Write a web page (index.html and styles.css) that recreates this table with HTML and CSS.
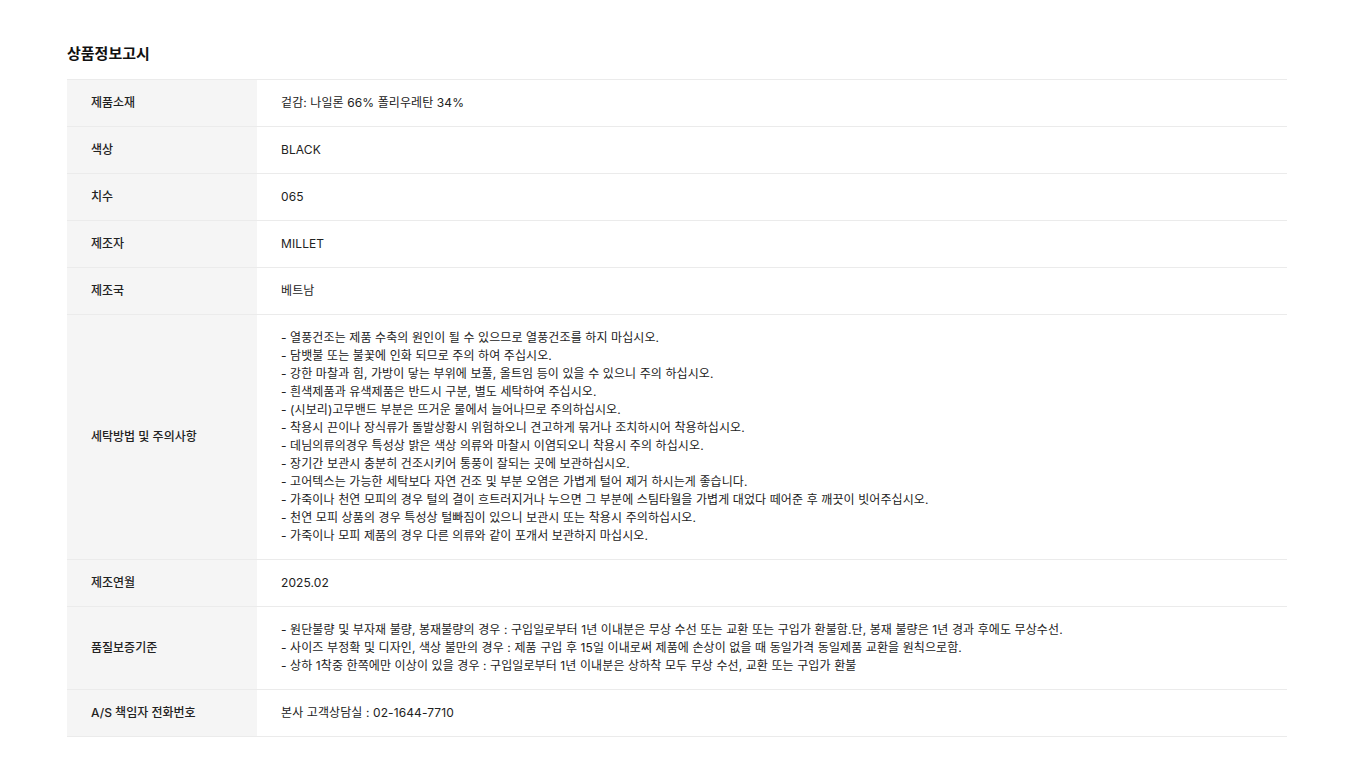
FILE: index.html
```html
<!DOCTYPE html>
<html lang="ko">
<head>
    <meta charset="UTF-8" />
    <meta name="viewport" content="width=device-width, initial-scale=1.0" />
    <title>상품정보고시</title>
    <link rel="stylesheet" href="styles.css">
</head>
<body>
    <div class="container">
        <h2 class="title">상품정보고시</h2>
        <table class="info">
            <tr>
                <th>제품소재</th>
                <td>겉감: 나일론 66% 폴리우레탄 34%</td>
            </tr>
            <tr>
                <th>색상</th>
                <td>BLACK</td>
            </tr>
            <tr>
                <th>치수</th>
                <td>065</td>
            </tr>
            <tr>
                <th>제조자</th>
                <td>MILLET</td>
            </tr>
            <tr>
                <th>제조국</th>
                <td>베트남</td>
            </tr>
            <tr>
                <th>세탁방법 및 주의사항</th>
                <td>- 열풍건조는 제품 수축의 원인이 될 수 있으므로 열풍건조를 하지 마십시오.<br>
- 담뱃불 또는 불꽃에 인화 되므로 주의 하여 주십시오.<br>
- 강한 마찰과 힘, 가방이 닿는 부위에 보풀, 올트임 등이 있을 수 있으니 주의 하십시오.<br>
- 흰색제품과 유색제품은 반드시 구분, 별도 세탁하여 주십시오.<br>
- (시보리)고무밴드 부분은 뜨거운 물에서 늘어나므로 주의하십시오.<br>
- 착용시 끈이나 장식류가 돌발상황시 위험하오니 견고하게 묶거나 조치하시어 착용하십시오.<br>
- 데님의류의경우 특성상 밝은 색상 의류와 마찰시 이염되오니 착용시 주의 하십시오.<br>
- 장기간 보관시 충분히 건조시키어 통풍이 잘되는 곳에 보관하십시오.<br>
- 고어텍스는 가능한 세탁보다 자연 건조 및 부분 오염은 가볍게 털어 제거 하시는게 좋습니다.<br>
- 가죽이나 천연 모피의 경우 털의 결이 흐트러지거나 누으면 그 부분에 스팀타월을 가볍게 대었다 떼어준 후 깨끗이 빗어주십시오.<br>
- 천연 모피 상품의 경우 특성상 털빠짐이 있으니 보관시 또는 착용시 주의하십시오.<br>
- 가죽이나 모피 제품의 경우 다른 의류와 같이 포개서 보관하지 마십시오.</td>
            </tr>
            <tr>
                <th>제조연월</th>
                <td>2025.02</td>
            </tr>
            <tr>
                <th>품질보증기준</th>
                <td>- 원단불량 및 부자재 불량, 봉재불량의 경우 : 구입일로부터 1년 이내분은 무상 수선 또는 교환 또는 구입가 환불함.단, 봉재 불량은 1년 경과 후에도 무상수선.<br>
- 사이즈 부정확 및 디자인, 색상 불만의 경우 : 제품 구입 후 15일 이내로써 제품에 손상이 없을 때 동일가격 동일제품 교환을 원칙으로함.<br>
- 상하 1착중 한쪽에만 이상이 있을 경우 : 구입일로부터 1년 이내분은 상하착 모두 무상 수선, 교환 또는 구입가 환불</td>
            </tr>
            <tr>
                <th>A/S 책임자 전화번호</th>
                <td>본사 고객상담실 : 02-1644-7710</td>
            </tr>
        </table>
    </div>
</body>
</html>
```

FILE: styles.css
```css
body,
h2,
table,
th,
td {
  margin: 0;
  padding: 0;
}

* {
  box-sizing: border-box;
}

body {
  font-family: 'Inter', 'Noto Sans CJK KR', sans-serif;
  color: #222;
  background-color: #fff;
}

.container {
  width: 1220px;
  margin: 0 auto;
  padding-top: 44px;
}

.title {
  font-size: 15px;
  font-weight: 700;
  line-height: 20px;
  color: #111;
  margin-bottom: 15px;
}

.info {
  width: 100%;
  border-collapse: collapse;
  border-top: 1px solid #ebebeb;
  font-size: 12px;
  line-height: 18px;
}

.info th,
.info td {
  padding: 14px 24px;
  border-bottom: 1px solid #ebebeb;
  text-align: left;
  vertical-align: middle;
}

.info th {
  width: 190px;
  background-color: #f5f5f5;
  font-weight: 500;
  color: #222;
}

.info td {
  color: #222;
  letter-spacing: 0.1px;
}
```
